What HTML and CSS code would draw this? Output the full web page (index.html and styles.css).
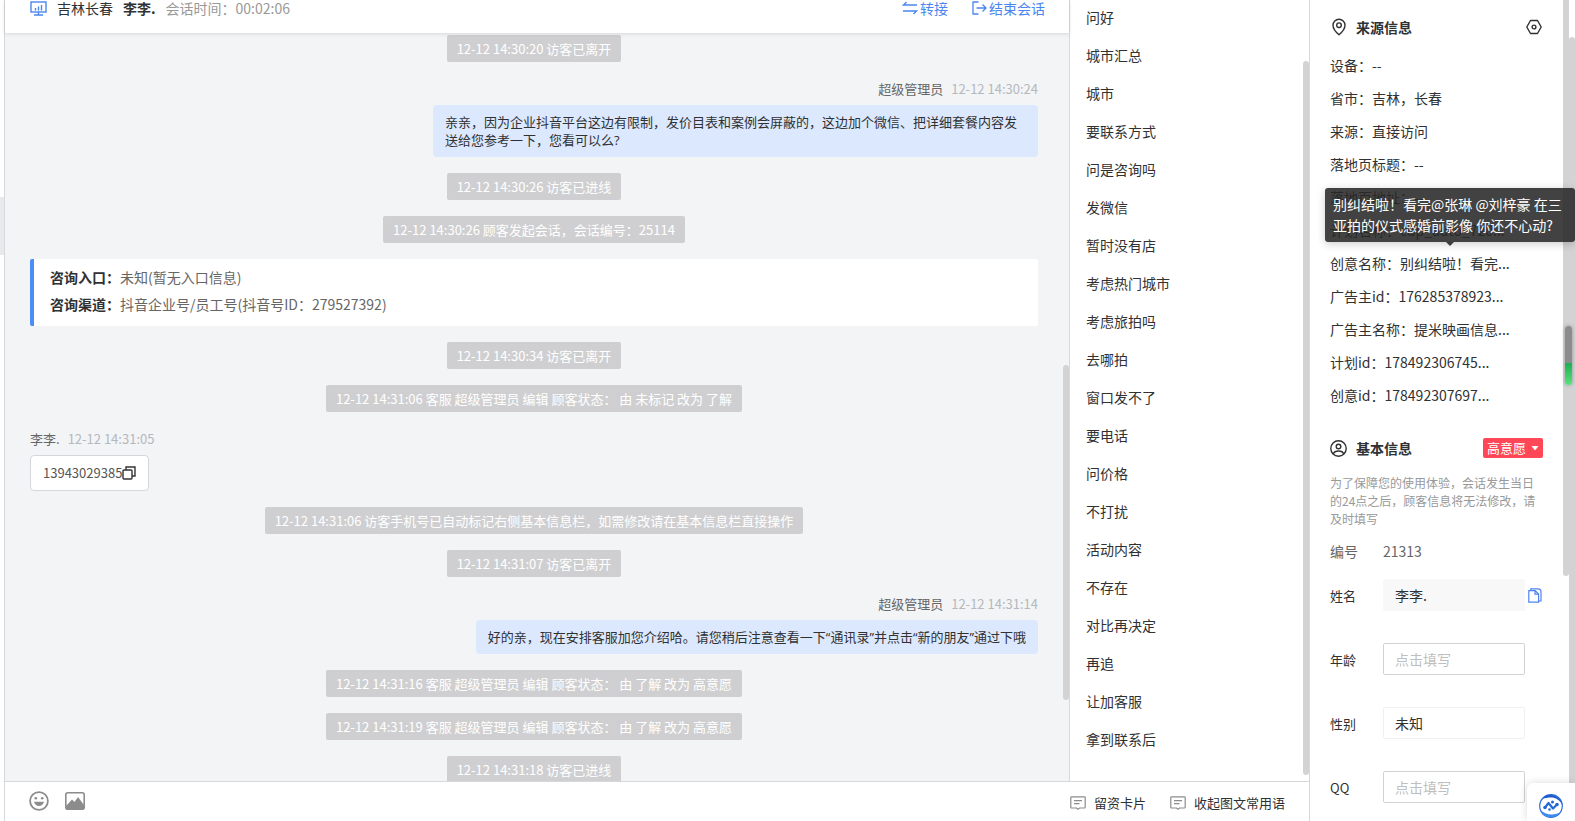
FILE: index.html
```html
<!DOCTYPE html>
<html lang="zh-CN">
<head>
    <meta charset="UTF-8">
    <meta name="viewport" content="width=device-width, initial-scale=1.0">
    <title>在线会话</title>
    <link rel="stylesheet" href="styles.css">
</head>
<body>
    <div class="app">
        <div class="session-strip"><div class="session-active"></div></div>

        <main class="workspace">
            <div class="workspace-top">
                <section class="chat">
                    <header class="chat-header">
                        <svg class="icon-screen" width="17" height="15" viewBox="0 0 17 15" fill="none" stroke="#4a86ee" stroke-width="1.4">
                            <rect x="1" y="1" width="15" height="10"/>
                            <path d="M8.5 11v2.500M4 14h9M5.500 7v2.500M8.500 5.500v4M11.500 4v5.500"/>
                        </svg>
                        <span class="city">吉林长春</span>
                        <strong class="visitor">李李.</strong>
                        <span class="duration">会话时间：00:02:06</span>
                        <div class="chat-actions">
                            <button class="link-button">
                                <svg width="16" height="14" viewBox="0 0 16 14" fill="none" stroke="#4a86ee" stroke-width="1.3">
                                    <path d="M15 4H1.500L4.500 1M1 10h13.500L11.500 13"/>
                                </svg>
                                转接
                            </button>
                            <button class="link-button">
                                <svg width="15" height="14" viewBox="0 0 15 14" fill="none" stroke="#4a86ee" stroke-width="1.3">
                                    <path d="M6.500 1H1v12h5.500M4.500 7H14M10.500 3.500L14 7l-3.500 3.500"/>
                                </svg>
                                结束会话
                            </button>
                        </div>
                    </header>

                    <!-- 消息列表 -->
                    <div class="messages">
                        <p class="notice">12-12 14:30:20 访客已离开</p>
                        <div class="message mine">
                            <div class="meta"><span class="sender">超级管理员</span><time>12-12 14:30:24</time></div>
                            <p class="bubble">亲亲，因为企业抖音平台这边有限制，发价目表和案例会屏蔽的，这边加个微信、把详细套餐内容发送给您参考一下，您看可以么?</p>
                        </div>
                        <p class="notice">12-12 14:30:26 访客已进线</p>
                        <p class="notice">12-12 14:30:26 顾客发起会话，会话编号：25114</p>
                        <div class="entry-card">
                            <div><strong>咨询入口：</strong>未知(暂无入口信息)</div>
                            <div><strong>咨询渠道：</strong>抖音企业号/员工号(抖音号ID：279527392)</div>
                        </div>
                        <p class="notice">12-12 14:30:34 访客已离开</p>
                        <p class="notice">12-12 14:31:06 客服 超级管理员 编辑 顾客状态： 由 未标记 改为 了解</p>
                        <div class="message">
                            <div class="meta"><span class="sender">李李.</span><time>12-12 14:31:05</time></div>
                            <div class="bubble phone">13943029385<button class="icon-button" aria-label="复制">
                                <svg width="14" height="14" viewBox="0 0 14 14" fill="none" stroke="#333" stroke-width="1.4">
                                    <rect x="1" y="4" width="9" height="9" rx="1"/>
                                    <path d="M4 4V1h9v9h-3"/>
                                </svg></button>
                            </div>
                        </div>
                        <p class="notice">12-12 14:31:06 访客手机号已自动标记右侧基本信息栏，如需修改请在基本信息栏直接操作</p>
                        <p class="notice">12-12 14:31:07 访客已离开</p>
                        <div class="message mine">
                            <div class="meta"><span class="sender">超级管理员</span><time>12-12 14:31:14</time></div>
                            <p class="bubble">好的亲，现在安排客服加您介绍哈。请您稍后注意查看一下“通讯录”并点击“新的朋友”通过下哦</p>
                        </div>
                        <p class="notice">12-12 14:31:16 客服 超级管理员 编辑 顾客状态： 由 了解 改为 高意愿</p>
                        <p class="notice">12-12 14:31:19 客服 超级管理员 编辑 顾客状态： 由 了解 改为 高意愿</p>
                        <p class="notice">12-12 14:31:18 访客已进线</p>
                    </div>
                    <div class="thumb thumb-chat"></div>
                </section>

                <!-- 常用语 -->
                <aside class="phrases">
                    <div class="phrase-list">
                        <button>问好</button>
                        <button>城市汇总</button>
                        <button>城市</button>
                        <button>要联系方式</button>
                        <button>问是咨询吗</button>
                        <button>发微信</button>
                        <button>暂时没有店</button>
                        <button>考虑热门城市</button>
                        <button>考虑旅拍吗</button>
                        <button>去哪拍</button>
                        <button>窗口发不了</button>
                        <button>要电话</button>
                        <button>问价格</button>
                        <button>不打扰</button>
                        <button>活动内容</button>
                        <button>不存在</button>
                        <button>对比再决定</button>
                        <button>再追</button>
                        <button>让加客服</button>
                        <button>拿到联系后</button>
                    </div>
                    <div class="thumb thumb-phrases"></div>
                </aside>
            </div>

            <footer class="toolbar">
                <button class="icon-button" aria-label="表情">
                    <svg width="20" height="20" viewBox="0 0 20 20">
                        <circle cx="10" cy="10" r="8.9" fill="none" stroke="#8c8c8c" stroke-width="1.8"/>
                        <circle cx="6.8" cy="7.2" r="1.3" fill="#8c8c8c"/>
                        <circle cx="13.2" cy="7.2" r="1.3" fill="#8c8c8c"/>
                        <path d="M5 10.800h10c-.6 2.700-2.500 4.200-5 4.200s-4.400-1.500-5-4.200z" fill="#8c8c8c"/>
                    </svg>
                </button>
                <button class="icon-button" aria-label="图片">
                    <svg width="20" height="18" viewBox="0 0 20 18">
                        <rect x=".8" y=".8" width="18.4" height="16.4" rx="2" fill="none" stroke="#8c8c8c" stroke-width="1.6"/>
                        <path d="M1 17v-3l6-6.500 2.500 2.500L13 5l6 8v4z" fill="#8c8c8c"/>
                    </svg>
                </button>
                <div class="toolbar-right">
                    <button class="text-button">
                        <svg width="16" height="14" viewBox="0 0 16 14" fill="none" stroke="#8c8c8c" stroke-width="1.2">
                            <path d="M1.600.8h12.800q.8 0 .8.8v9.600q0 .8-.8.8H9.500L8 13.200 6.500 12H1.600q-.8 0-.8-.8V1.600q0-.8.8-.8zM4 4.700h8M4 7.700h5.500"/>
                        </svg>
                        留资卡片
                    </button>
                    <button class="text-button">
                        <svg width="16" height="14" viewBox="0 0 16 14" fill="none" stroke="#8c8c8c" stroke-width="1.2">
                            <path d="M1.600.8h12.800q.8 0 .8.8v9.600q0 .8-.8.8H9.500L8 13.200 6.500 12H1.600q-.8 0-.8-.8V1.600q0-.8.8-.8zM4 4.700h8M4 7.700h5.500"/>
                        </svg>
                        收起图文常用语
                    </button>
                </div>
            </footer>
        </main>

        <!-- 顾客信息 -->
        <aside class="profile">
            <div class="panel-title">
                <svg width="17" height="18" viewBox="0 0 17 18" fill="none" stroke="#303133" stroke-width="1.4">
                    <path d="M9 16.800C6 14.300 3 11 3 7.300a6 6 0 0 1 12 0c0 3.700-3 7-6 9.500z"/>
                    <circle cx="9" cy="7.2" r="2.3"/>
                </svg>
                <h2>来源信息</h2>
                <button class="icon-button" aria-label="设置">
                    <svg width="17" height="16" viewBox="0 0 17 16" fill="none" stroke="#303133" stroke-width="1.4">
                        <path d="M4.500 1.500h7L15.200 8l-3.700 6.500h-7L.8 8z" stroke-linejoin="round"/>
                        <circle cx="8" cy="8" r="1.9"/>
                    </svg>
                </button>
            </div>
            <div class="source-list">
                <div>设备：--</div>
                <div>省市：吉林，长春</div>
                <div>来源：直接访问</div>
                <div>落地页标题：--</div>
                <div>落地页地址：--</div>
                <div>计划名称：cdp_auto_720...</div>
                <div class="has-tip">创意名称：别纠结啦！看完...
                    <div class="tooltip" role="tooltip">别纠结啦！看完@张琳 @刘梓豪 在三<br>亚拍的仪式感婚前影像 你还不心动?</div>
                </div>
                <div>广告主id：176285378923...</div>
                <div>广告主名称：提米映画信息...</div>
                <div>计划id：178492306745...</div>
                <div>创意id：178492307697...</div>
            </div>

            <div class="panel-title basic">
                <svg width="17" height="17" viewBox="0 0 17 17" fill="none" stroke="#303133" stroke-width="1.4">
                    <circle cx="8.5" cy="8.5" r="7.700"/>
                    <circle cx="8.5" cy="6.5" r="2.3"/>
                    <path d="M3.200 14c.8-2.200 2.700-3 5.300-3s4.500.8 5.300 3"/>
                </svg>
                <h2>基本信息</h2>
                <button class="level">高意愿
                    <svg width="8" height="5" viewBox="0 0 8 5"><path d="M.5 0h7L4 4.500z" fill="#fff"/></svg>
                </button>
            </div>
            <p class="hint">为了保障您的使用体验，会话发生当日的24点之后，顾客信息将无法修改，请及时填写</p>
            <div class="number-row"><span>编号</span><span>21313</span></div>
            <form class="fields">
                <div class="field">
                    <label for="name">姓名</label>
                    <input type="text" id="name" class="filled" value="李李.">
                    <button type="button" class="icon-button" aria-label="复制姓名">
                        <svg width="14" height="15" viewBox="0 0 14 15" fill="none" stroke="#4f83ee" stroke-width="1.2">
                            <path d="M.8 2.600h6.400l3.400 3.400v8.200H.8zM7 2.600v3.600h3.600"/>
                            <path d="M2.800 2.500V.8h7.200q3 0 3 3v9.200h-2.400"/>
                        </svg>
                    </button>
                </div>
                <div class="field">
                    <label for="age">年龄</label>
                    <input type="text" id="age" placeholder="点击填写">
                </div>
                <div class="field">
                    <label for="gender">性别</label>
                    <select id="gender"><option>未知</option></select>
                </div>
                <div class="field">
                    <label for="qq">QQ</label>
                    <input type="text" id="qq" placeholder="点击填写">
                </div>
            </form>
            <div class="thumb thumb-profile"></div>
            <div class="thumb thumb-page"></div>
            <div class="meter"></div>
            <button class="assistant" aria-label="助手">
                <svg width="24" height="24" viewBox="0 0 24 24">
                    <circle cx="12" cy="12" r="11.3" fill="#fff" stroke="#2f6de0" stroke-width="1.2"/>
                    <path d="M3 5C7-.8 16-1 21.500 6c1 1.500 1.700 3 2 5-2.500-5-7-7.500-11.500-7.500-3.500 0-6 .5-9 1.500z" fill="#1c5ccc"/>
                    <path d="M1.500 16c4 4.500 13 6 19 2.500C16 25.500 4.500 25 1.500 16z" fill="#3c8cf0"/>
                    <path d="M6 13.500L9.500 9l4.500 5.500 4-4" fill="none" stroke="#2468d8" stroke-width="2.2" stroke-linejoin="round"/>
                    <circle cx="6" cy="13.500" r="1.800" fill="#2468d8"/>
                    <circle cx="13.500" cy="8" r="1.500" fill="#2468d8"/>
                    <circle cx="10.500" cy="15.500" r="1.300" fill="#2468d8"/>
                    <circle cx="18" cy="10.500" r="1.800" fill="#2468d8"/>
                </svg>
            </button>
        </aside>
    </div>
</body>
</html>
```
FILE: styles.css
```css
:root {
    --blue: #4a86ee;
    --text: #303133;
    --border: #d5d9dc;
    --chat-bg: #f3f4f6;
    --thumb: #d3d3d3;
    --font: "Noto Sans CJK SC", sans-serif;
}

* {
    box-sizing: border-box;
}

body {
    margin: 0;
    font-family: var(--font);
    font-size: 14px;
    color: var(--text);
    background-color: white;
}

p, h2 {
    margin: 0;
}

button, input, select {
    font-family: inherit;
    font-size: inherit;
    color: inherit;
}

button {
    padding: 0;
    border: none;
    background: none;
    cursor: pointer;
}

svg {
    display: block;
    flex-shrink: 0;
}

.app {
    display: flex;
    height: 100vh;
    overflow: hidden;
}

.session-strip {
    width: 5px;
    padding-top: 197px;
    border-right: 1px solid var(--border);
}

.session-active {
    height: 58px;
    background-color: #e8e9eb;
}

.workspace {
    flex: 1;
    min-width: 0;
    display: flex;
    flex-direction: column;
}

.workspace-top {
    flex: 1;
    min-height: 0;
    display: flex;
}

/* 会话区 */
.chat {
    flex: 1;
    min-width: 0;
    display: flex;
    flex-direction: column;
    position: relative;
    background-color: var(--chat-bg);
}

.chat-header {
    display: flex;
    align-items: center;
    flex-shrink: 0;
    padding: 0 24px 17px 25px;
    line-height: 16px;
    background-color: white;
    box-shadow: 0 1px 4px rgba(0, 0, 0, 0.12);
    z-index: 1;
}

.city {
    margin-left: 10px;
}

.visitor {
    margin: 0 10px;
}

.duration {
    color: #999;
}

.chat-actions {
    display: flex;
    gap: 24px;
    margin-left: auto;
}

.link-button {
    display: flex;
    align-items: center;
    gap: 2px;
    line-height: 16px;
    color: var(--blue);
}

.messages {
    flex: 1;
    min-height: 0;
    overflow: hidden;
    display: flex;
    flex-direction: column;
    gap: 16px;
    padding: 2px 31px 0 25px;
    font-size: 13px;
    line-height: 18px;
}

.messages > * {
    flex-shrink: 0;
}

.notice {
    align-self: center;
    padding: 0 10px;
    line-height: 27px;
    color: white;
    background-color: #cfcfd1;
    border-radius: 2px;
}

.message {
    display: flex;
    flex-direction: column;
    align-items: flex-start;
}

.message.mine {
    align-items: flex-end;
}

.meta {
    display: flex;
    gap: 8px;
    line-height: 22px;
    padding-bottom: 5px;
}

.sender {
    color: #666;
}

.meta time {
    color: #b5b8bd;
}

.bubble {
    max-width: 605px;
    padding: 8px 12px;
    border-radius: 4px;
    background-color: #dce8fd;
    font-family: "Open Sans", "Noto Sans CJK SC", sans-serif;
}

.phone {
    display: flex;
    align-items: center;
    border: 1px solid #d4d7db;
    background-color: white;
    color: #555;
    font-family: var(--font);
}

.entry-card {
    padding: 5px 16px 8px;
    border-left: 4px solid #4c8df6;
    border-radius: 2px;
    background-color: white;
    font-size: 14px;
    line-height: 27px;
    color: #666;
}

.entry-card strong {
    color: var(--text);
}

/* 滚动条 */
.thumb {
    position: absolute;
    width: 6px;
    border-radius: 3px;
    background-color: var(--thumb);
}

.thumb-chat {
    top: 365px;
    right: 0;
    height: 335px;
}

.thumb-phrases {
    top: 61px;
    right: 0;
    bottom: 6px;
}

.thumb-profile {
    top: -6px;
    right: 6px;
    height: 582px;
}

.thumb-page {
    top: 37px;
    right: 0;
    bottom: -6px;
}

/* 常用语 */
.phrases {
    width: 240px;
    position: relative;
    overflow: hidden;
    border-left: 1px solid var(--border);
}

.phrase-list {
    margin-top: -2px;
}

.phrases button {
    display: block;
    width: 100%;
    padding: 0 16px;
    line-height: 38px;
    text-align: left;
}

.phrases button:hover {
    color: var(--blue);
}

.toolbar {
    display: flex;
    align-items: center;
    gap: 16px;
    height: 40px;
    flex-shrink: 0;
    padding: 0 24px 2px;
    border-top: 1px solid var(--border);
    font-size: 13px;
}

.toolbar-right {
    display: flex;
    gap: 24px;
    margin-left: auto;
    padding-top: 4px;
}

.text-button {
    display: flex;
    align-items: center;
    gap: 8px;
    line-height: 20px;
}

/* 顾客信息 */
.profile {
    width: 266px;
    flex-shrink: 0;
    position: relative;
    padding: 11px 32px 0 20px;
    border-left: 1px solid var(--border);
}

.panel-title {
    display: flex;
    align-items: center;
    gap: 9px;
    height: 32px;
}

.panel-title h2 {
    flex: 1;
    font-size: 14px;
}

.source-list {
    padding: 6px 0 5px;
    line-height: 33px;
    white-space: nowrap;
}

.has-tip {
    position: relative;
}

.tooltip {
    position: absolute;
    left: -5px;
    bottom: 38px;
    z-index: 2;
    width: 250px;
    padding: 6px 8px;
    border-radius: 3px;
    line-height: 21px;
    color: white;
    background-color: rgba(40, 40, 40, 0.88);
    box-shadow: 0 2px 8px rgba(0, 0, 0, 0.2);
}

.tooltip::after {
    content: "";
    position: absolute;
    top: 100%;
    left: 50%;
    margin-left: -4px;
    border: 4px solid transparent;
    border-top-color: #3c3c3c;
    border-bottom: none;
}

.basic {
    margin-top: 15px;
}

.level {
    display: flex;
    align-items: center;
    gap: 5px;
    padding: 0 4px;
    border-radius: 2px;
    background-color: #ff4757;
    font-size: 13px;
    line-height: 20px;
    color: white;
}

.hint {
    margin-top: 10px;
    font-size: 12px;
    line-height: 18px;
    color: #999;
}

.number-row {
    display: flex;
    margin-top: 12px;
    line-height: 22px;
    color: #666;
}

.number-row span:first-child {
    width: 53px;
}

.fields {
    display: flex;
    flex-direction: column;
    gap: 32px;
    margin-top: 17px;
}

.field {
    display: flex;
    align-items: center;
    height: 32px;
}

.field label {
    width: 53px;
    flex-shrink: 0;
    font-size: 13px;
}

.field input, .field select {
    width: 142px;
    height: 32px;
    padding: 0 11px;
    border: 1px solid #d0d2d6;
    border-radius: 2px;
    background-color: white;
    appearance: none;
}

.field select {
    border-color: #f0f0f0;
}

.field .filled {
    border-color: #f8f8f9;
    background-color: #f8f8f9;
}

.field input::placeholder {
    color: #bfbfbf;
}

.field .icon-button {
    margin-left: 3px;
}

.meter {
    position: absolute;
    top: 326px;
    right: 3px;
    width: 7px;
    height: 59px;
    border-radius: 4px;
    background: linear-gradient(#8c8c8c 62%, #1fae55 63%, #5be07e);
    box-shadow: 0 0 4px rgba(0, 0, 0, 0.3);
}

.assistant {
    position: absolute;
    right: 0;
    bottom: 0;
    width: 48px;
    height: 38px;
    padding: 8px 12px 0;
    border-radius: 6px 0 0 0;
    background-color: white;
    box-shadow: 0 0 8px rgba(0, 0, 0, 0.15);
}
```
